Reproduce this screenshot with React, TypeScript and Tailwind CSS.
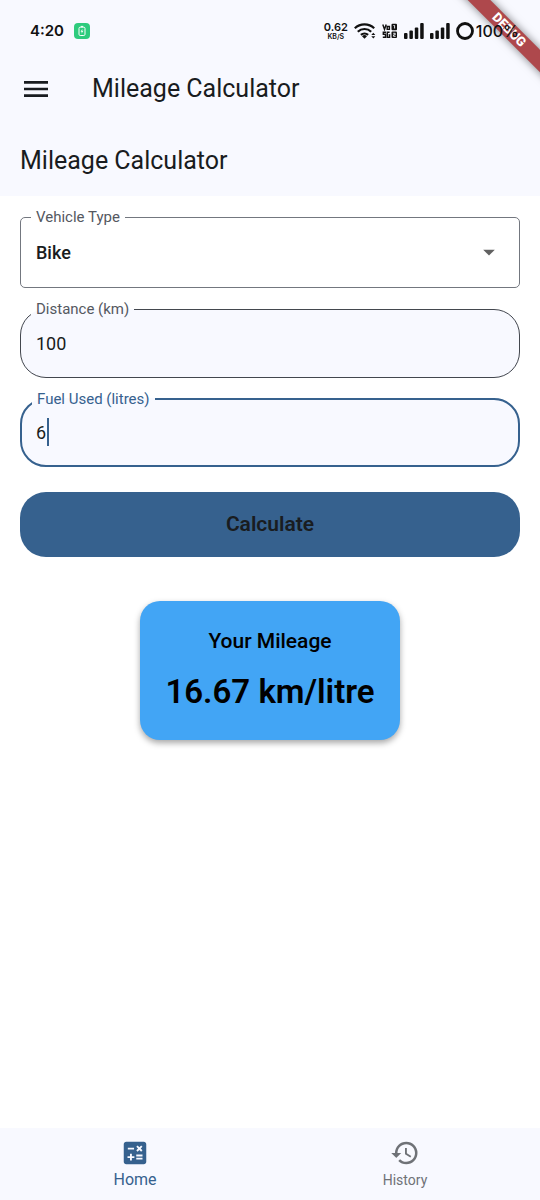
import { useState } from "react";
import type { ReactNode } from "react";
import { MdArrowDropDown, MdCalculate, MdHistory, MdMenu } from "react-icons/md";

function BatteryBadge() {
  return (
    <svg viewBox="0 0 16 16" className="h-4 w-4" aria-hidden="true">
      <rect width="16" height="16" rx="4" fill="#2ecb7d" />
      <rect x="5" y="4.2" width="6" height="8.3" rx="1.2" fill="none" stroke="#fff" strokeWidth="1" />
      <path d="M6.8 3.4h2.4" stroke="#fff" strokeWidth="1" />
      <path d="M8.4 5.8 6.6 8.7h1.2l-.3 2 1.9-2.9H8.1z" fill="#fff" />
    </svg>
  );
}

function WifiIcon() {
  return (
    <svg viewBox="0 0 22 16" className="h-4 w-[22px]" fill="none" stroke="#111" strokeWidth="2.2" aria-hidden="true">
      <path d="M.8 5.2a14 14 0 0 1 19.4 0" />
      <path d="M3.8 8.7a9.6 9.6 0 0 1 13.4 0" />
      <path d="M6.9 11.9a5.4 5.4 0 0 1 7.2 0" />
      <path d="M8 13.2a3.6 3.6 0 0 1 5 0L10.5 15.8z" fill="#111" stroke="none" />
      <path d="m17.3 12 2-2.3 2 2.3zM17.3 13.3l2 2.3 2-2.3z" fill="#111" stroke="none" />
    </svg>
  );
}

function NetworkIcon() {
  return (
    <svg viewBox="0 0 16 16" className="h-4 w-4" aria-hidden="true">
      <path
        d="M.8 1.5 2.500 6.3 4.2 1.5M5.2 3.5h2.2v2.9H5.2zM4 9.2H1.3v2.1h2.2v2.9H.8M7.6 9.2H5.3v5h2.3v-2.3H6.5"
        fill="none"
        stroke="#111"
        strokeWidth="1.4"
      />
      <rect x="9.5" y=".8" width="5.5" height="6.4" rx="1" fill="#111" />
      <rect x="9.5" y="8.6" width="5.5" height="6.4" rx="1" fill="#111" />
      <path d="M11.4 2.5h1.2v3M11.2 10.3h2v1.5h-1.6v1.5h2" fill="none" stroke="#f8f9ff" strokeWidth=".9" />
    </svg>
  );
}

function SignalIcon() {
  return (
    <svg viewBox="0 0 20 16" className="h-4 w-5" fill="#111" aria-hidden="true">
      <rect x="0" y="10" width="3.5" height="6" rx="1" />
      <rect x="5.4" y="7.5" width="3.5" height="8.5" rx="1" />
      <rect x="10.8" y="4.5" width="3.5" height="11.5" rx="1" />
      <rect x="16.2" y="0" width="3.5" height="16" rx="1" />
    </svg>
  );
}

function BatteryRing() {
  return (
    <svg viewBox="0 0 18 18" className="h-[18px] w-[18px]" aria-hidden="true">
      <circle cx="9" cy="9" r="7.5" fill="none" stroke="#111" strokeWidth="2.8" />
    </svg>
  );
}

function DebugBanner() {
  return (
    <div className="pointer-events-none absolute top-0 right-0 h-28 w-28 overflow-hidden">
      <div className="absolute top-[22px] -right-[49px] flex h-4 w-40 rotate-45 items-center justify-center bg-[#ae484c] text-[13px] leading-4 font-black text-white shadow-[0_0_8px_rgba(0,0,0,0.5)]">
        DEBUG
      </div>
    </div>
  );
}

function StatusBar() {
  return (
    <div className="relative">
      <DebugBanner />
      <div className="relative flex h-[62px] items-center justify-between pr-[21px] pl-[30px] font-['Inter',sans-serif] text-[#111]">
        <div className="flex items-center gap-[10px]">
          <span className="text-[15px] leading-5 font-semibold">4:20</span>
          <BatteryBadge />
        </div>
        <div className="flex items-center gap-[6px]">
          <div className="flex flex-col items-center font-semibold">
            <span className="text-[11px] leading-[11px]">0.62</span>
            <span className="text-[7px] leading-[7px]">KB/S</span>
          </div>
          <WifiIcon />
          <NetworkIcon />
          <SignalIcon />
          <SignalIcon />
          <div className="flex items-center gap-[2px]">
            <BatteryRing />
            <span className="text-[16px] leading-5 font-medium">100%</span>
          </div>
        </div>
      </div>
    </div>
  );
}

function Field(props: { id: string; label: string; className: string; labelClass: string; children: ReactNode }) {
  return (
    <fieldset className={`min-w-0 ${props.className}`}>
      <legend className="ml-[10px] px-[5px] text-[15px] leading-4">
        <label htmlFor={props.id} className={props.labelClass}>
          {props.label}
        </label>
      </legend>
      {props.children}
    </fieldset>
  );
}

export default function App() {
  const [vehicle, setVehicle] = useState("Bike");
  const [distance, setDistance] = useState("100");
  const [fuel, setFuel] = useState("6");
  const [mileage, setMileage] = useState("16.67");

  const calculate = () => {
    const result = Number(distance) / Number(fuel);
    if (Number.isFinite(result)) setMileage(result.toFixed(2));
  };

  return (
    <div className="flex min-h-screen flex-col bg-white font-['Roboto',sans-serif] text-[#191c20]">
      <header className="bg-[#f8f9ff]">
        <StatusBar />
        <div className="flex h-[54px] items-center gap-10 px-5">
          <button type="button" aria-label="Open menu">
            <MdMenu className="h-8 w-8" />
          </button>
          <h1 className="text-[25px] leading-8">Mileage Calculator</h1>
        </div>
        <div className="flex h-20 items-center px-5 pt-[10px]">
          <h2 className="text-[25px] leading-8">Mileage Calculator</h2>
        </div>
      </header>

      <main className="flex flex-1 flex-col px-5 pt-[13px]">
        <Field
          id="vehicle"
          label="Vehicle Type"
          className="rounded-[5px] border border-[#73777f]"
          labelClass="text-[#54585f]"
        >
          <div className="relative">
            <select
              id="vehicle"
              value={vehicle}
              onChange={(e) => setVehicle(e.target.value)}
              className="h-[62px] w-full appearance-none bg-transparent px-[15px] pb-[7px] text-[18px] font-medium outline-none"
            >
              <option>Bike</option>
              <option>Car</option>
            </select>
            <MdArrowDropDown className="pointer-events-none absolute top-[13px] right-4 h-7 w-7 text-[#616161]" />
          </div>
        </Field>

        <div className="mt-[13px]">
          <Field
            id="distance"
            label="Distance (km)"
            className="rounded-[26px] border border-[#43474e] bg-[#f8f9ff]"
            labelClass="text-[#54585f]"
          >
            <input
              id="distance"
              inputMode="decimal"
              value={distance}
              onChange={(e) => setDistance(e.target.value)}
              className="h-[60px] w-full bg-transparent px-[15px] pb-2 text-[18px] outline-none"
            />
          </Field>
        </div>

        <div className="mt-[13px]">
          <Field
            id="fuel"
            label="Fuel Used (litres)"
            className="rounded-[26px] border-2 border-[#36618e] bg-[#f8f9ff]"
            labelClass="text-[#36618e]"
          >
            <div className="relative">
              <input
                id="fuel"
                inputMode="decimal"
                value={fuel}
                onChange={(e) => setFuel(e.target.value)}
                className="h-[58px] w-full bg-transparent px-[14px] pb-2 text-[18px] caret-[#36618e] outline-none"
              />
              <span className="pointer-events-none absolute top-[11px] left-[25px] h-7 w-[2px] bg-[#36618e]" />
            </div>
          </Field>
        </div>

        <button
          type="button"
          onClick={calculate}
          className="mt-[25px] h-[65px] rounded-[26px] bg-[#36618e] text-[21px] font-semibold"
        >
          Calculate
        </button>

        <section className="mt-11 flex flex-col items-center self-center rounded-[20px] bg-[#42a5f5] px-[25px] pt-[26px] pb-[28px] text-black shadow-[0_3px_6px_rgba(0,0,0,0.35)]">
          <h3 className="text-[21px] leading-7 font-medium">Your Mileage</h3>
          <p className="mt-[17px] text-[33px] leading-10 font-semibold">{mileage} km/litre</p>
        </section>
      </main>

      <nav className="flex h-[72px] bg-[#f8f9ff]">
        <a href="#home" className="flex flex-1 flex-col items-center pt-[10px] text-[#36618e]">
          <MdCalculate className="h-[30px] w-[30px]" />
          <span className="text-[16px] leading-6">Home</span>
        </a>
        <a href="#history" className="flex flex-1 flex-col items-center pt-[10px] text-[#6f7277]">
          <MdHistory className="h-[30px] w-[30px]" />
          <span className="text-[14px] leading-6">History</span>
        </a>
      </nav>
    </div>
  );
}
